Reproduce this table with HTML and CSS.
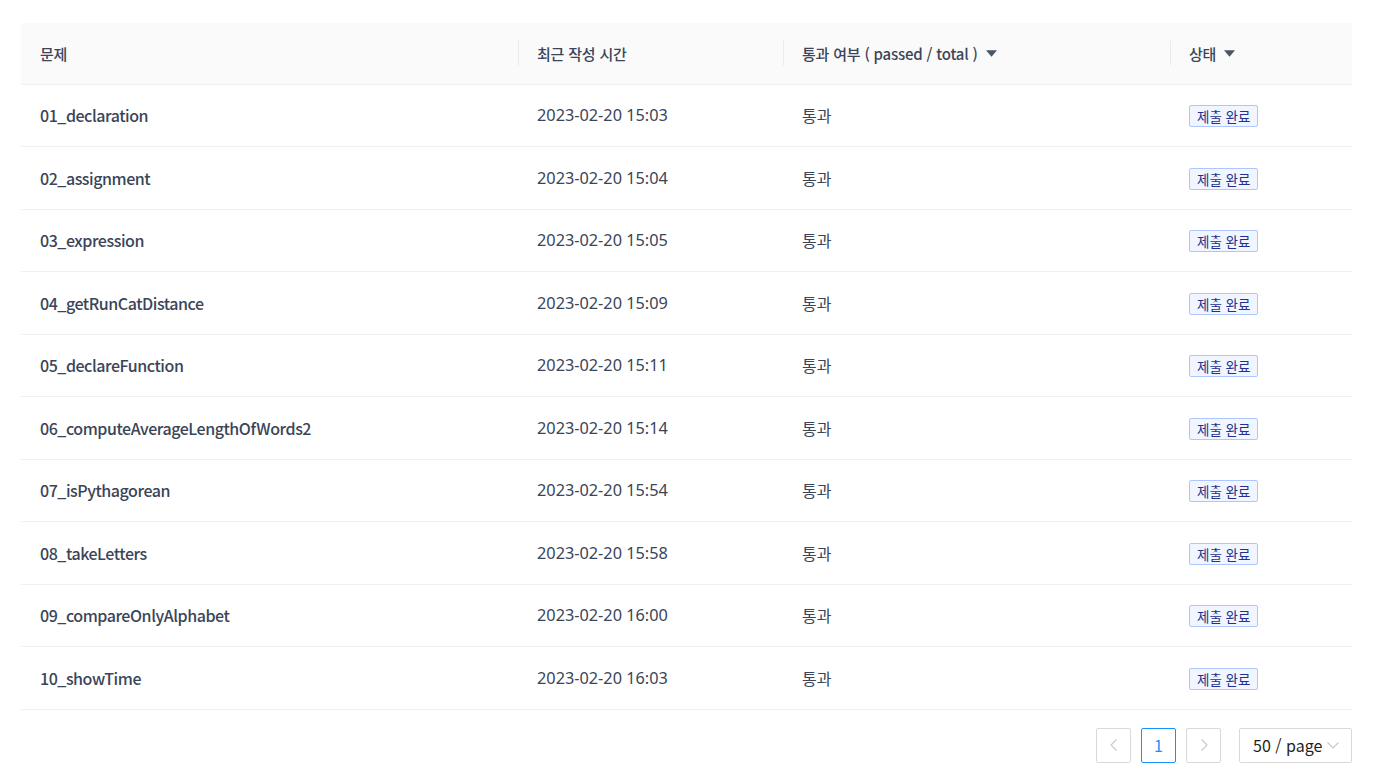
FILE: index.html
```html
<!DOCTYPE html>
<html lang="ko">
<head>
<meta charset="utf-8">
<title>제출 목록</title>
<link rel="stylesheet" href="styles.css">
</head>
<body>
<div class="page">
  <table class="tbl">
    <colgroup>
      <col class="c1"><col class="c2"><col class="c3"><col class="c4">
    </colgroup>
    <thead>
      <tr>
        <th>문제</th>
        <th class="sep">최근 작성 시간</th>
        <th class="sep"><span class="th-f">통과 여부 ( passed / total ) <svg class="caret" viewBox="0 0 10 6" width="11" height="7"><path d="M0 0H10L5 6Z" fill="#4b5563"/></svg></span></th>
        <th class="sep"><span class="th-f">상태 <svg class="caret" viewBox="0 0 10 6" width="11" height="7"><path d="M0 0H10L5 6Z" fill="#4b5563"/></svg></span></th>
      </tr>
    </thead>
    <tbody>
      <tr><td class="name">01_declaration</td><td class="date">2023-02-20 15:03</td><td>통과</td><td><span class="tag">제출 완료</span></td></tr>
      <tr><td class="name">02_assignment</td><td class="date">2023-02-20 15:04</td><td>통과</td><td><span class="tag">제출 완료</span></td></tr>
      <tr><td class="name">03_expression</td><td class="date">2023-02-20 15:05</td><td>통과</td><td><span class="tag">제출 완료</span></td></tr>
      <tr><td class="name">04_getRunCatDistance</td><td class="date">2023-02-20 15:09</td><td>통과</td><td><span class="tag">제출 완료</span></td></tr>
      <tr><td class="name">05_declareFunction</td><td class="date">2023-02-20 15:11</td><td>통과</td><td><span class="tag">제출 완료</span></td></tr>
      <tr><td class="name">06_computeAverageLengthOfWords2</td><td class="date">2023-02-20 15:14</td><td>통과</td><td><span class="tag">제출 완료</span></td></tr>
      <tr><td class="name">07_isPythagorean</td><td class="date">2023-02-20 15:54</td><td>통과</td><td><span class="tag">제출 완료</span></td></tr>
      <tr><td class="name">08_takeLetters</td><td class="date">2023-02-20 15:58</td><td>통과</td><td><span class="tag">제출 완료</span></td></tr>
      <tr><td class="name">09_compareOnlyAlphabet</td><td class="date">2023-02-20 16:00</td><td>통과</td><td><span class="tag">제출 완료</span></td></tr>
      <tr><td class="name">10_showTime</td><td class="date">2023-02-20 16:03</td><td>통과</td><td><span class="tag">제출 완료</span></td></tr>
    </tbody>
  </table>
  <div class="pager">
    <button class="pg disabled" aria-label="이전"><svg viewBox="0 0 14 14" width="14" height="14"><path d="M9.5 1.5L4 7L9.5 12.5" fill="none" stroke="#c8c8c8" stroke-width="1.1"/></svg></button>
    <button class="pg active">1</button>
    <button class="pg disabled" aria-label="다음"><svg viewBox="0 0 14 14" width="14" height="14"><path d="M4.5 1.5L10 7L4.5 12.5" fill="none" stroke="#c8c8c8" stroke-width="1.1"/></svg></button>
    <div class="size"><span>50 / page</span><svg viewBox="0 0 12 12" width="12" height="12"><path d="M0.5 3.5L6 9L11.5 3.5" fill="none" stroke="#c8c8c8" stroke-width="1.1"/></svg></div>
  </div>
</div>
</body>
</html>
```
FILE: styles.css
```css
* { box-sizing: border-box; }
html, body { margin: 0; padding: 0; background: #fff; }
body {
  font-family: "Noto Sans CJK KR", "Noto Sans", sans-serif;
  color: #3a4558;
}
.page {
  padding: 23px 25px 0 21px;
}
.tbl {
  width: 100%;
  border-collapse: collapse;
  table-layout: fixed;
}
.c1 { width: 497px; }
.c2 { width: 265px; }
.c3 { width: 387px; }
.c4 { width: auto; }
.tbl th {
  background: #fafafa;
  height: 61px;
  padding: 0 18px 0 19px;
  text-align: left;
  font-size: 15px;
  font-weight: 500;
  letter-spacing: -0.2px;
  color: #3a4558;
  border-bottom: 1px solid #f0f0f0;
  position: relative;
}
.tbl th.sep::before {
  content: "";
  position: absolute;
  left: 0;
  top: 50%;
  transform: translateY(-50%);
  width: 1px;
  height: 25px;
  background: #ebebeb;
}
.th-f { display: inline-flex; align-items: center; gap: 8px; }
.caret { display: block; }
.tbl td {
  height: 62.5px;
  padding: 0 18px 0 19px;
  font-size: 16px;
  color: #3a4558;
  border-bottom: 1px solid #f0f0f0;
  white-space: nowrap;
}
.tbl td.name { font-weight: 500; letter-spacing: -0.45px; }
.tbl td.date { font-family: "Noto Sans", "Noto Sans CJK KR", sans-serif; font-size: 16.3px; }
.tag {
  display: inline-block;
  font-size: 13.5px;
  line-height: 20px;
  padding: 0 7px;
  background: #f0f5ff;
  border: 1px solid #adc6ff;
  border-radius: 2px;
  color: #24318c;
}
.pager {
  display: flex;
  justify-content: flex-end;
  align-items: center;
  margin-top: 18px;
  gap: 10px;
}
.pg {
  width: 35px;
  height: 35px;
  border: 1px solid #d9d9d9;
  border-radius: 2px;
  background: #fff;
  display: flex;
  align-items: center;
  justify-content: center;
  padding: 0;
  font-family: "Noto Sans CJK KR", "Noto Sans", sans-serif;
  font-size: 16px;
  color: #1890ff;
}
.pg.active { border-color: #1890ff; }
.size {
  margin-left: 8px;
  width: 113px;
  height: 35px;
  border: 1px solid #d9d9d9;
  border-radius: 2px;
  display: flex;
  align-items: center;
  justify-content: space-between;
  padding: 0 12px 0 13px;
  font-size: 16px;
  color: #1f1f1f;
  white-space: nowrap;
}
```
